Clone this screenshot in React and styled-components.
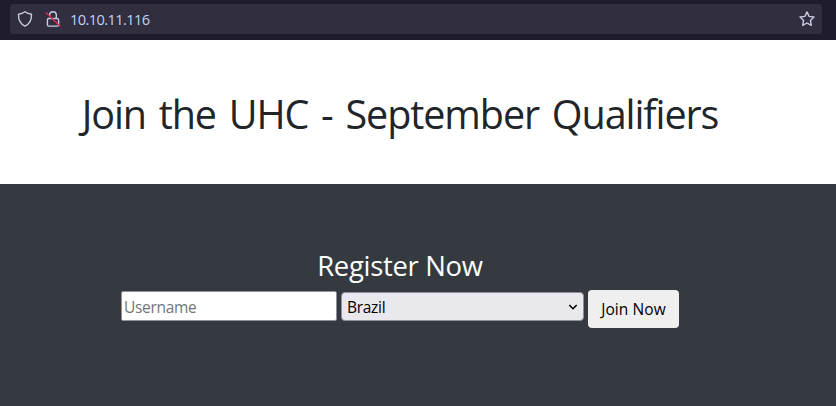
import React from "react";
import styled, { createGlobalStyle } from "styled-components";

const GlobalStyle = createGlobalStyle`
  * { box-sizing: border-box; }
  body { margin: 0; background: #fff; font-family: "Open Sans", "Noto Sans", sans-serif; }
`;

const Page = styled.div`
  display: flex;
  flex-direction: column;
  height: 406px;
  overflow: hidden;
`;

const BrowserBar = styled.header`
  height: 40px;
  padding: 4px 14px 6px 10px;
  background: #1f1c2e;
`;

const AddressBar = styled.div`
  display: flex;
  align-items: center;
  height: 30px;
  padding: 0 7px;
  border-radius: 3px;
  background: #312e40;
  color: #c6cbe0;
`;

const Icon = styled.svg`
  display: block;
  flex: none;
  width: 16px;
  height: 16px;
  margin-right: ${(p) => p.$gap || 0}px;
  fill: none;
  stroke: currentColor;
  stroke-width: 1.4;
  stroke-linecap: round;
  stroke-linejoin: round;
`;

const Label = styled.span`
  white-space: nowrap;
  letter-spacing: ${(p) => p.$tracking || 0}px;
  word-spacing: ${(p) => p.$words || 0}px;
`;

const Address = styled.div`
  flex: 1;
  font-size: 14.6px;
  line-height: 20px;
  color: #c3d3f0;
`;

const Hero = styled.section`
  display: flex;
  justify-content: center;
  height: 144px;
  padding: 50px 36px 0 0;
  background: #fff;
`;

const Title = styled.h1`
  margin: 0;
  font-size: 39.5px;
  font-weight: 400;
  line-height: 48px;
  color: #212529;
`;

const Register = styled.section`
  display: flex;
  flex-direction: column;
  align-items: center;
  flex: 1;
  padding: 65px 36px 0 0;
  background: #343a40;
`;

const Heading = styled.h3`
  margin: 0 0 7px;
  font-size: 27.4px;
  font-weight: 400;
  line-height: 34px;
  color: #fff;
`;

const Form = styled.form`
  display: flex;
  align-items: flex-start;
  gap: 4px;
`;

const Username = styled.input`
  width: 216px;
  height: 30px;
  margin-top: 1px;
  padding: 3px 3px 1px 2px;
  border: 1px solid #8f8f9d;
  border-radius: 2px;
  background: #fff;
  font: 15.5px "Open Sans", sans-serif;
  letter-spacing: -0.3px;
  &::placeholder { color: #757575; opacity: 1; }
`;

const Country = styled.div`
  display: flex;
  align-items: center;
  justify-content: space-between;
  width: 243px;
  height: 29px;
  margin-top: 2px;
  padding: 1px 5px 0 5px;
  border: 1px solid #8f8f9d;
  border-radius: 4px;
  background: #e9e9ed;
  color: #000;
  font-size: 15.5px;
`;

const Chevron = styled.svg`
  width: 10px;
  height: 10px;
  fill: none;
  stroke: #000;
  stroke-width: 1.6;
`;

const JoinButton = styled.button`
  width: 91px;
  height: 38px;
  padding: 0;
  border: 0;
  border-radius: 4px;
  background: #efefef;
  color: #000;
  font: 15.5px "Open Sans", sans-serif;
`;

export default function App() {
  return (
    <Page>
      <GlobalStyle />
      <BrowserBar>
        <AddressBar>
          <Icon viewBox="0 0 16 16" $gap={12}>
            <path d="M8 .8C10 2.2 12 2.9 14.5 3.2 14.7 8.8 12.5 13 8 15.2 3.5 13 1.3 8.8 1.5 3.2 4 2.9 6 2.2 8 .8Z" />
          </Icon>
          <Icon viewBox="0 0 16 16" $gap={9}>
            <path d="M4.7 4.5V4a3.3 3.3 0 0 1 6.6 0v3.5M4 7.5h8.2a1.4 1.4 0 0 1 1.4 1.4v4.8a1.4 1.4 0 0 1-1.4 1.4H3.8a1.4 1.4 0 0 1-1.4-1.4V8.9A1.4 1.4 0 0 1 3.8 7.5" />
            <path d="m1.2 1.7 13.6 13.4" stroke="#e22850" />
          </Icon>
          <Address><Label $tracking={-0.6}>10.10.11.116</Label></Address>
          <Icon viewBox="0 0 16 16">
            <path d="m8 .9 2.1 4.5 4.9.6-3.6 3.4.9 5L8 12l-4.3 2.4.9-5L1 6l4.9-.6Z" />
          </Icon>
        </AddressBar>
      </BrowserBar>
      <Hero>
        <Title><Label $tracking={-1.08} $words={3.6}>Join the UHC - September Qualifiers</Label></Title>
      </Hero>
      <Register>
        <Heading><Label $tracking={-0.28}>Register Now</Label></Heading>
        <Form onSubmit={(e) => e.preventDefault()}>
          <Username placeholder="Username" />
          <Country>
            <Label $tracking={-0.3}>Brazil</Label>
            <Chevron viewBox="0 0 10 10"><path d="m1.3 3 3.7 3.7L8.7 3" /></Chevron>
          </Country>
          <JoinButton><Label $tracking={0.1}>Join Now</Label></JoinButton>
        </Form>
      </Register>
    </Page>
  );
}
